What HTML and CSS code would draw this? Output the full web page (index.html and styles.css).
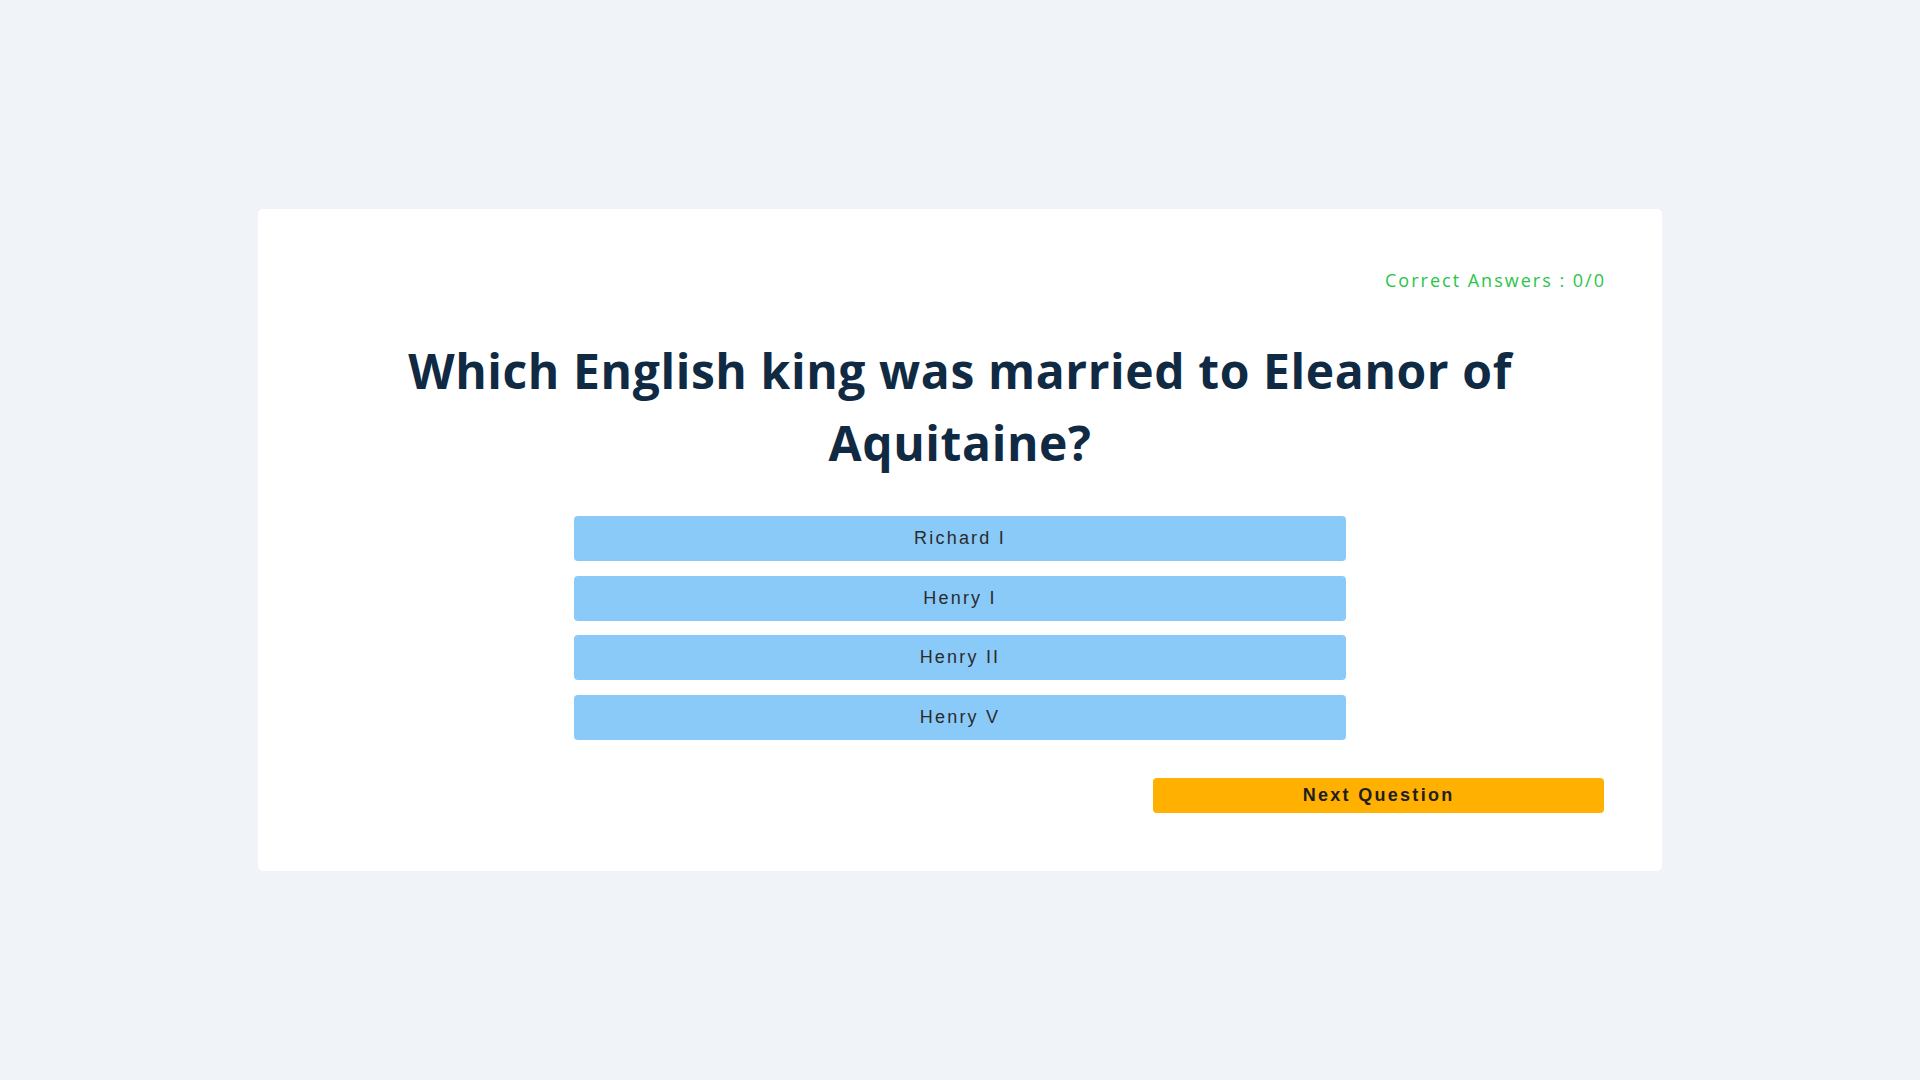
FILE: index.html
```html
<!DOCTYPE html>
<html lang="en">
<head>
<meta charset="utf-8">
<title>Quiz</title>
<link rel="stylesheet" href="styles.css">
</head>
<body>
<main class="page">
  <section class="card">
    <div class="score">Correct Answers : 0/0</div>
    <h1 class="question">Which English king was married to Eleanor of Aquitaine?</h1>
    <div class="answers">
      <button class="answer">Richard I</button>
      <button class="answer">Henry I</button>
      <button class="answer">Henry II</button>
      <button class="answer">Henry V</button>
    </div>
    <div class="footer">
      <button class="next">Next Question</button>
    </div>
  </section>
</main>
</body>
</html>
```
FILE: styles.css
```css
* { box-sizing: border-box; }
html, body { margin: 0; padding: 0; }
body {
  background: #f0f4f8;
  font-family: "Open Sans", "Noto Sans", sans-serif;
}
.page {
  height: 1080px;
  display: flex;
  align-items: center;
  justify-content: center;
}
.card {
  width: 1404px;
  background: #ffffff;
  border-radius: 5px;
  padding: 59px 58px 58px;
  display: flex;
  flex-direction: column;
}
.score {
  align-self: flex-end;
  color: #2bc44a;
  font-size: 18px;
  line-height: 24px;
  letter-spacing: 2px;
  margin-right: -2px;
}
.question {
  margin: 43px 0 37px;
  text-align: center;
  color: #102a43;
  font-weight: 700;
  font-size: 48px;
  line-height: 72px;
  letter-spacing: 0.6px;
}
.answers {
  display: flex;
  flex-direction: column;
  align-items: center;
  gap: 14.7px;
}
.answer {
  width: 60%;
  height: 45px;
  border: none;
  border-radius: 4px;
  background: #8acaf8;
  color: #2b2b2b;
  font-family: "Liberation Sans", Arial, sans-serif;
  font-size: 18px;
  letter-spacing: 2.2px;
  padding: 0;
}
.footer {
  display: flex;
  justify-content: flex-end;
  margin-top: 38px;
}
.next {
  width: 35%;
  height: 35px;
  border: none;
  border-radius: 4px;
  background: #ffb000;
  color: #1f1f1f;
  font-family: "Liberation Sans", Arial, sans-serif;
  font-weight: 700;
  font-size: 18px;
  letter-spacing: 2.3px;
  padding: 0;
}
```
